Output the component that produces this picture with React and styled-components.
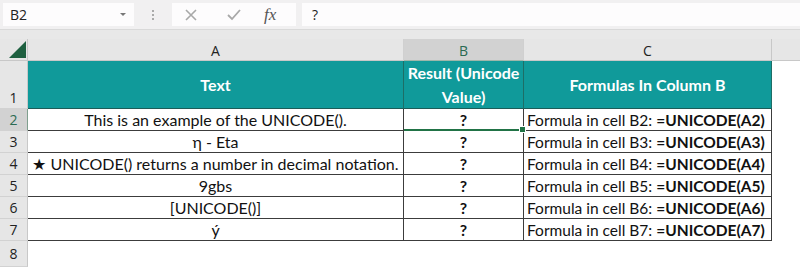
import React from "react";
import styled, { createGlobalStyle } from "styled-components";

const Global = createGlobalStyle`
  html, body { margin: 0; padding: 0; background: #ffffff; overflow: hidden; }
  * { box-sizing: border-box; }
`;

const Page = styled.div`
  width: 800px;
  height: 267px;
  background: #e8e8e8;
  display: flex;
  flex-direction: column;
`;

const FormulaBar = styled.div`
  height: 30px;
  background: #f1f0f1;
  display: flex;
  align-items: stretch;
  padding: 3px 0 3px 3px;
  border-bottom: 1px solid #d9d9d9;
`;

const NameBox = styled.div`
  width: 131px;
  background: #fdfcfd;
  display: flex;
  align-items: center;
  justify-content: space-between;
  padding: 0 8px 0 7px;
  font-family: "Open Sans", "Noto Sans", sans-serif;
  font-size: 14px;
  color: #222;
`;

const Arrow = styled.span`
  width: 0;
  height: 0;
  border-left: 3px solid transparent;
  border-right: 3px solid transparent;
  border-top: 3px solid #777;
`;

const Dots = styled.div`
  width: 38px;
  display: flex;
  flex-direction: column;
  align-items: center;
  justify-content: center;
  gap: 2px;
  span {
    width: 2px;
    height: 2px;
    background: #aaa;
  }
`;

const IconBox = styled.div`
  width: 124px;
  background: #fdfcfd;
  display: flex;
  align-items: center;
  padding: 0 0 0 12px;
  svg { display: block; }
`;

const Fx = styled.span`
  margin-left: 22px;
  font-family: "Liberation Serif", serif;
  font-style: italic;
  font-size: 17px;
  color: #555;
`;

const InputBox = styled.div`
  flex: 1;
  margin-left: 6px;
  background: #fdfcfd;
  display: flex;
  align-items: center;
  padding-left: 10px;
  font-family: "Open Sans", "Noto Sans", sans-serif;
  font-size: 14px;
  color: #222;
`;

const Gap = styled.div`
  height: 9px;
`;

const Sheet = styled.div`
  display: grid;
  grid-template-columns: 28px 376px 120px 248px 1fr;
  grid-template-rows: 22px 48px repeat(6, 22px) 1fr;
  flex: 1;
`;

const Corner = styled.div`
  background: #e6e6e6;
  border-right: 1px solid #c8c8c8;
  border-bottom: 1px solid #c8c8c8;
  display: flex;
  align-items: flex-end;
  justify-content: flex-end;
  padding: 0 1px 2px 0;
`;

const ColHead = styled.div`
  background: ${p => (p.$active ? "#d2d2d2" : "#e6e6e6")};
  color: ${p => (p.$active ? "#2b6a52" : "#222")};
  border-right: 1px solid ${p => (p.$last ? "#c8c8c8" : "#d0d0d0")};
  border-bottom: 1px solid ${p => (p.$active ? "#9fb7aa" : "#c8c8c8")};
  display: flex;
  align-items: center;
  justify-content: center;
  font-family: "Open Sans", "Noto Sans", sans-serif;
  font-size: 14px;
  padding-top: 1px;
`;

const Filler = styled.div`
  background: #e6e6e6;
  border-bottom: 1px solid #c8c8c8;
`;

const RowHead = styled.div`
  background: ${p => (p.$active ? "#d2d2d2" : "#e6e6e6")};
  color: ${p => (p.$active ? "#2b6a52" : "#222")};
  border-right: 1px solid ${p => (p.$active ? "#7f9f8e" : "#c8c8c8")};
  border-bottom: 1px solid #d2d2d2;
  display: flex;
  align-items: ${p => (p.$bottom ? "flex-end" : "center")};
  justify-content: center;
  font-family: "Open Sans", "Noto Sans", sans-serif;
  font-size: 14px;
  padding-bottom: ${p => (p.$bottom ? "1px" : "0")};
`;

const HeadCell = styled.div`
  background: #109a9a;
  color: #ffffff;
  border-right: 1px solid #1d6e66;
  border-bottom: 1px solid #1d5c58;
  display: flex;
  align-items: center;
  justify-content: center;
  text-align: center;
  font-family: "Lato", "Open Sans", sans-serif;
  font-weight: 700;
  font-size: 16px;
  line-height: 24px;
  padding: 0 2px;
`;

const Cell = styled.div`
  position: relative;
  background: #ffffff;
  color: #111;
  border-right: 1px solid #3c3c3c;
  border-bottom: 1px solid #3c3c3c;
  display: flex;
  align-items: center;
  justify-content: ${p => (p.$left ? "flex-start" : "center")};
  padding: ${p => (p.$left ? "0 0 0 3px" : "0")};
  font-family: "Lato", "Open Sans", sans-serif;
  font-size: ${p => (p.$left ? "15.5px" : "16px")};
  font-weight: ${p => (p.$bold ? 700 : 400)};
  white-space: nowrap;
  ${p =>
    p.$selected &&
    `
    border-bottom: 2px solid #217346;
    &::after {
      content: "";
      position: absolute;
      right: -3px;
      bottom: -4px;
      width: 5px;
      height: 5px;
      background: #217346;
      border: 1px solid #fff;
      z-index: 2;
    }
  `}
`;

const Empty = styled.div`
  background: #ffffff;
`;

const Bold = styled.b`
  font-weight: 700;
  margin-left: 4px;
`;

const rows = [
  "This is an example of the UNICODE().",
  "η - Eta",
  "★ UNICODE() returns a number in decimal notation.",
  "9gbs",
  "[UNICODE()]",
  "ý",
];

export default function App() {
  return (
    <>
      <Global />
      <Page>
        <FormulaBar>
          <NameBox>
            B2
            <Arrow />
          </NameBox>
          <Dots>
            <span />
            <span />
            <span />
          </Dots>
          <IconBox>
            <svg width="14" height="14" viewBox="0 0 14 14">
              <path d="M2 2 L12 12 M12 2 L2 12" stroke="#a8a8a8" strokeWidth="1.6" fill="none" />
            </svg>
            <svg width="16" height="14" viewBox="0 0 16 14" style={{ marginLeft: 28 }}>
              <path d="M2 7 L6 11 L14 2" stroke="#a8a8a8" strokeWidth="1.8" fill="none" />
            </svg>
            <Fx>fx</Fx>
          </IconBox>
          <InputBox>?</InputBox>
        </FormulaBar>
        <Gap />
        <Sheet>
          <Corner>
            <svg width="17" height="17" viewBox="0 0 17 17">
              <polygon points="17,0 17,17 0,17" fill="#1e6040" />
            </svg>
          </Corner>
          <ColHead>A</ColHead>
          <ColHead $active>B</ColHead>
          <ColHead $last>C</ColHead>
          <Filler />

          <RowHead $bottom>1</RowHead>
          <HeadCell>Text</HeadCell>
          <HeadCell>Result (Unicode Value)</HeadCell>
          <HeadCell>Formulas In Column B</HeadCell>
          <Empty />

          {rows.map((t, i) => {
            const n = i + 2;
            return (
              <React.Fragment key={n}>
                <RowHead $active={n === 2}>{n}</RowHead>
                <Cell>{t}</Cell>
                <Cell $bold $selected={n === 2}>?</Cell>
                <Cell $left>
                  Formula in cell B{n}:<Bold>=UNICODE(A{n})</Bold>
                </Cell>
                <Empty />
              </React.Fragment>
            );
          })}

          <RowHead>8</RowHead>
          <Empty />
          <Empty />
          <Empty />
          <Empty />
        </Sheet>
      </Page>
    </>
  );
}
